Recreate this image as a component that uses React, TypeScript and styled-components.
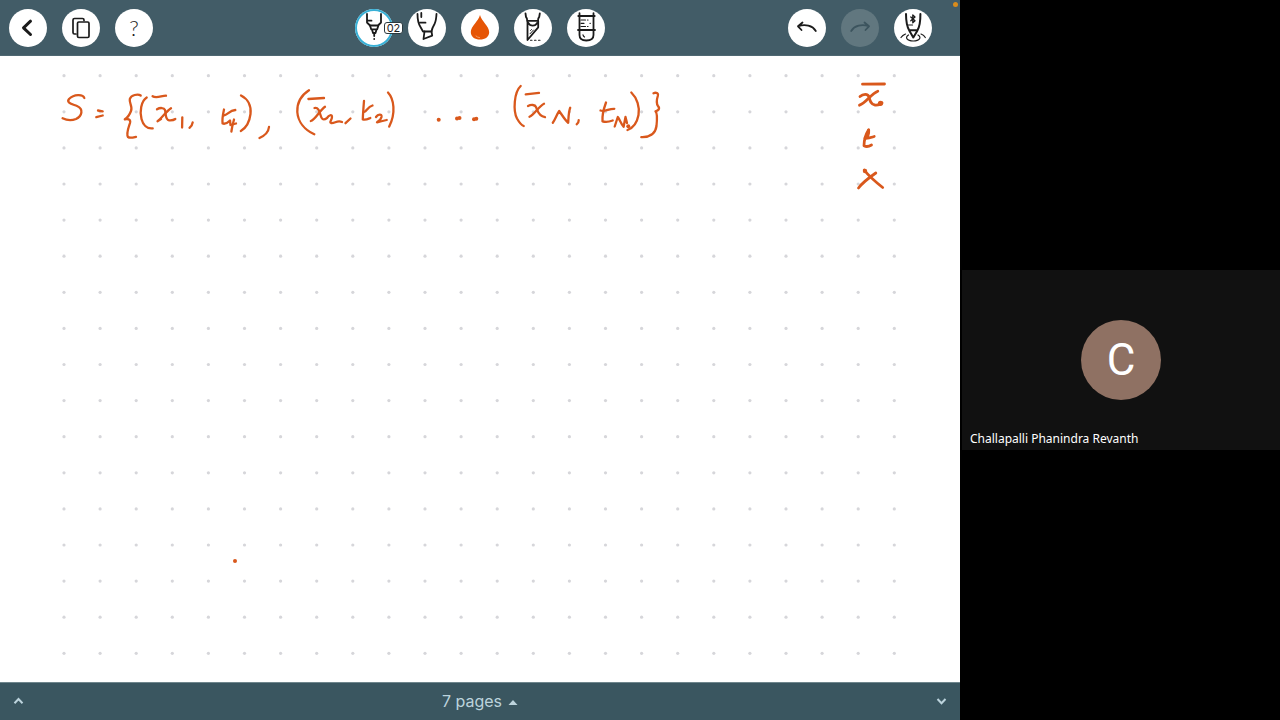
import React from "react";
import styled, { createGlobalStyle, css } from "styled-components";

const GlobalStyle = createGlobalStyle`
  * { box-sizing: border-box; }
  body { margin: 0; background: #000; }
  button { font: inherit; border: 0; padding: 0; cursor: pointer; }
`;

const Screen = styled.div`
  display: grid;
  grid-template-columns: minmax(0, 3fr) minmax(0, 1fr);
  min-height: 100vh;
  background: #000;
`;

const Board = styled.main`
  display: flex;
  flex-direction: column;
  background: #fff;
`;

const Toolbar = styled.header`
  position: relative;
  display: grid;
  grid-template-columns: 1fr auto 1fr;
  align-items: center;
  height: 56px;
  padding: 0 28px 0 9px;
  background: #425c67;
  border-bottom: 1px solid #4f6872;
`;

const ToolGroup = styled.div<{ $align?: "start" | "end" | "center" }>`
  display: flex;
  gap: 15px;
  justify-content: ${(p) => p.$align ?? "center"};
`;

const CenterTools = styled(ToolGroup)`
  margin-left: 19px;
`;

const RoundButton = styled.button<{ $active?: boolean }>`
  position: relative;
  display: flex;
  align-items: center;
  justify-content: center;
  width: 38px;
  height: 38px;
  border-radius: 50%;
  background: #fff;
  color: #1b1b1b;
  font-family: Lato, sans-serif;
  font-size: 22px;
  font-weight: 300;
  line-height: 24px;
  ${(p) =>
    p.$active &&
    css`
      box-shadow: inset 0 0 0 2px #38b0d6;
    `}
  &:disabled {
    background: #61777f;
    color: #3c545e;
  }
`;

const Badge = styled.span`
  position: absolute;
  top: 13px;
  left: 29px;
  width: 19px;
  height: 12px;
  border: 1px solid #2b3a40;
  border-radius: 3px;
  background: #fff;
  font-family: Inter, sans-serif;
  font-size: 11px;
  font-weight: 400;
  line-height: 10px;
  text-align: center;
`;

const Notice = styled.span`
  position: absolute;
  top: 2px;
  right: 2px;
  width: 5px;
  height: 5px;
  border-radius: 50%;
  background: #d98c1c;
`;

const Page = styled.svg`
  display: block;
  flex: 1 0 auto;
  width: 100%;
`;

const Footer = styled.footer`
  display: flex;
  align-items: center;
  justify-content: space-between;
  height: 38px;
  padding: 0 12px 2px;
  background: #3a5660;
  border-top: 1px solid #6f868d;
`;

const FooterButton = styled.button`
  display: flex;
  align-items: center;
  gap: 6px;
  background: none;
  color: #bcd3dc;
  font-family: Inter, sans-serif;
  font-size: 16px;
  line-height: 20px;
`;

const CallPanel = styled.aside`
  display: flex;
  flex-direction: column;
  justify-content: center;
  padding-left: 2px;
`;

const Tile = styled.section`
  position: relative;
  display: flex;
  align-items: center;
  justify-content: center;
  min-height: 180px;
  background: #111;
`;

const Avatar = styled.div`
  display: flex;
  align-items: center;
  justify-content: center;
  width: 80px;
  height: 80px;
  border-radius: 50%;
  background: #8f7163;
  color: #fff;
  font-family: Roboto, sans-serif;
  font-size: 44px;
  line-height: 60px;
`;

const Name = styled.span`
  position: absolute;
  left: 8px;
  bottom: 3px;
  color: #fff;
  font-family: "Noto Sans", sans-serif;
  font-size: 12px;
  line-height: 16px;
`;

const Icon = ({ children, width = 1.8 }: { children: React.ReactNode; width?: number }) => (
  <svg
    width="38"
    height="38"
    viewBox="0 0 38 38"
    fill="none"
    stroke="currentColor"
    strokeWidth={width}
    strokeLinecap="round"
    strokeLinejoin="round"
    aria-hidden="true"
  >
    {children}
  </svg>
);

const COLUMNS = 24;
const ROWS = 17;
const STEP = 36.1;

const fineInk = [
  // S =
  "M84.3 98 C83 94 74 94 69 99 C66 103 72 104 77 106 C84 109 82 116 76 119 C71 121 66 120 62.6 118.3",
  "M98 110.5 L102.7 111.3",
  "M96.3 117.2 L102.7 115.5",
  // opening brace and first pair
  "M140.7 95.5 C138 93.5 131 95 129.8 99 C129 103 133 107 131 111 C129.5 115 127 118 124.8 119.3 C128 118.5 131 119.5 130 123 C128 129 126 134 128 137 C130 138.5 133 137.5 136 136.8",
  "M146.7 97.5 C141 101 139.5 112 141.5 119 C143 125 147 129 152.7 128.3",
  "M152.6 96.2 C156 98.5 161 96 166 95.7",
  "M157 109.3 C160 107.5 164 107.5 165 110 C166 113 165 120 169 120.3 C172 120.5 174 120 175.3 119",
  "M171 108.3 C166 111.5 161 119 157.5 121.2 L161 119",
  "M182.3 117.3 L182.1 127.5",
  "M192.7 122.3 Q192.3 125.5 189.5 127.8",
  "M224 109.5 C223 114 222 119 222.6 123.5 C225 124.3 228 122.5 230 120.5 L230.5 125 L236 123.5",
  "M223.5 115.5 C228 115 229 110.5 235.3 110",
  "M234 119.5 C233 123 232 127 231.4 131.5",
  "M241 95.5 C248 99 251.5 106 250.5 114 C249.5 122 246 128 240.8 131",
  "M269 127 C268.5 132 264 136 259.5 138",
  // second pair
  "M309 90.3 C300 96 297 104 297.3 112 C298 122 305 130 314.3 134.3",
  "M308.4 99 L324 98",
  "M314.5 108 C318 107 319.5 111 320.5 115 C321.5 119 323 121 327 118 C329 115 332 114 332 117 C332 120 329 122.5 331 123 C335 123.5 337 120 342 122",
  "M325 106.8 C320 110 315 120 310.8 121",
  "M350.5 118.5 L345.5 123.2",
  "M364 101 C363.5 107 363 113 362.8 119.5 C366 120.2 368 119 370.3 118",
  "M364 112 C367 111 367.5 107 372.5 105.5",
  "M376 117 C378 114 382 113.5 381.5 117 C381 120 378 121.5 377 122.3 C380 121.5 383 120.8 386.7 120",
  "M388 92.5 C394 99 396 113 389.2 126.6",
  // third pair and closing brace
  "M520.7 86 C514 92 513 111 517 118.5 C519 122 521 125 523.7 126",
  "M525.7 94.3 L539 92.8",
  "M528 106 C531 104.5 535 104.5 536 107 C537.5 110 538 116 545 117.2",
  "M544 103.7 C539 106 534 115 529.5 116.8",
  "M552.8 122.8 C555 120 557 114 559.2 111 C562 115 565 120 568.2 122.8 C568.5 118 568.5 112 570.2 107.8",
  "M578.7 120.2 Q578.7 123 576.7 124.2",
  "M606 102.5 C604 108 602 115 602.5 121.3 C606 122.5 610 121.5 612.7 120.5",
  "M600.5 110.5 C605 112 609 108.5 614.3 108.8",
  "M614.7 126.5 L617.8 117 C620 120 621 124 623.6 126.8 L625.5 117 L627 123",
  "M631.3 92.5 C637 98 640 107 638.5 115 C637 123 633 128 627.5 130",
  "M653.5 93.2 C656 92.2 658.7 93 657.8 96 C656.5 100 656 103 658 106 C660.5 109 658 110.5 655.5 111.3 C657.5 113 657 121 656.5 126 C655.5 134 649 137.5 641.3 137.2",
];

const boldInk = [
  "M862.5 84.2 L884.5 84",
  "M860 96.5 C863 93.7 868 93.3 869 97 C870 101 871 104.5 875 105 C878 105.2 881 104 882 102.8",
  "M877.8 91.3 C871 94 866 103 859.5 105.2",
  "M868.5 130 C866 134 864 140 864 145.8 C867 147.3 869 146.5 871.5 145",
  "M868.7 130 C869 134 868 137 865 138.2 C869 138.5 871 137.5 874.2 136.5",
  "M864.2 170 C868 175 877 183 882.7 187.5",
  "M875.8 173 C870 177 863 182 858.5 188",
];

const inkDots = [
  [438.7, 119.7],
  [457, 118.4],
  [459.5, 118],
  [474, 119.2],
  [476.3, 118.7],
  [235, 561],
  [628.3, 126.2],
];

function Canvas() {
  const dots: React.ReactNode[] = [];
  for (let r = 0; r < ROWS; r++) {
    for (let c = 0; c < COLUMNS; c++) {
      dots.push(<circle key={`${r}-${c}`} cx={64 + c * STEP} cy={75.7 + r * STEP} r="1.6" />);
    }
  }
  return (
    <Page viewBox="0 56 960 626" preserveAspectRatio="xMidYMin meet" role="img" aria-label="Handwritten notes">
      <g fill="#d6d6da">{dots}</g>
      <g fill="none" stroke="#d9581c" strokeLinecap="round" strokeLinejoin="round">
        <g strokeWidth="2.3">
          {fineInk.map((d) => (
            <path key={d} d={d} />
          ))}
        </g>
        <g strokeWidth="2.8">
          {boldInk.map((d) => (
            <path key={d} d={d} />
          ))}
        </g>
      </g>
      <g fill="#d9581c">
        {inkDots.map(([x, y]) => (
          <circle key={x} cx={x} cy={y} r="2" />
        ))}
        <circle cx="880.5" cy="103.3" r="2.6" />
        <circle cx="865" cy="171" r="2.2" />
      </g>
    </Page>
  );
}

export default function App() {
  return (
    <Screen>
      <GlobalStyle />
      <Board>
        <Toolbar>
          <ToolGroup $align="start">
            <RoundButton aria-label="Back">
              <Icon width={3}>
                <path d="M21.5 12.2 L14.5 18.8 L21.5 25.5" />
              </Icon>
            </RoundButton>
            <RoundButton aria-label="Pages">
              <Icon width={1.7}>
                <path d="M14 25 H12.5 Q11 25 11 23.5 V11 Q11 9.5 12.5 9.5 H20.5 Q22 9.5 22 11 V11.5" />
                <rect x="15.5" y="13" width="11.5" height="15.5" rx="1.3" />
              </Icon>
            </RoundButton>
            <RoundButton aria-label="Help">?</RoundButton>
          </ToolGroup>

          <CenterTools>
            <RoundButton $active aria-label="Pen, size 02">
              <Icon>
                <path d="M12 5 V13.5 L15 16.5 H23 L26 13.5 V5 M13 11.7 H16.5" />
                <path d="M15 16.5 L16.2 20.3 H22.2 L23.4 16.5 M17 20.5 L18 24 H20.5 L21.5 20.5 M19.2 24 V27 M19.2 30 V30.1" />
              </Icon>
              <Badge>02</Badge>
            </RoundButton>
            <RoundButton aria-label="Marker">
              <Icon>
                <path d="M9.5 5 C9.5 11 10.5 15 12.5 18 L15 22.5 H23.5 C24 19 25 17.5 26.5 15 C28 12 28.3 9 28.5 5" />
                <path d="M13.3 4 V8 M12 13.7 H17.5 M16.5 22.5 L15.5 30 L24.2 26.7 L23.5 22.5" />
              </Icon>
            </RoundButton>
            <RoundButton aria-label="Ink colour">
              <Icon>
                <path
                  d="M19 6 C20.5 12 28.2 17.5 28.2 23 C28.2 28 24 30.5 19 30.5 C14 30.5 9.8 28 9.8 23 C9.8 17.5 17.5 12 19 6 Z"
                  fill="#e65505"
                  stroke="none"
                />
                <path d="M15 27 Q16.5 28.5 18.5 28.6" stroke="#f29a63" strokeWidth="1" />
              </Icon>
            </RoundButton>
            <RoundButton aria-label="Cutter">
              <Icon>
                <path d="M11.5 4.5 L12 8 Q13.2 9 13.2 11.8 H24 Q24 9 25.2 8 L25.8 4.5" />
                <path d="M13.5 12 V31 L24.2 18.3 V12 M14.5 14 C16 17.5 21.5 17.5 23 14" />
                <path d="M16.5 21.5 L17.5 20.5 M16 24.8 L19.5 21" strokeWidth="1" />
                <path d="M16.5 31.3 H26" strokeDasharray="1.5 2.5" strokeWidth="1.1" />
              </Icon>
            </RoundButton>
            <RoundButton aria-label="Eraser">
              <Icon>
                <path d="M12.5 4.2 V26 Q12.5 31.5 19.3 31.5 Q26.5 31.5 26.5 26 V4.2 M11.3 7 H27.7 M11 21 H28" />
                <path d="M14 11 H18.5 M14 14.3 H17 M14 17.5 H18.5 M23 14.3 H23.3 M20.5 11 H21 M20.5 17.5 H21 M16 25.8 Q16.3 27.3 17.5 28" strokeWidth="1.2" />
              </Icon>
            </RoundButton>
          </CenterTools>

          <ToolGroup $align="end">
            <RoundButton aria-label="Undo">
              <Icon>
                <path d="M14.5 13.5 L10 17.3 L13.5 21 M10.5 17.2 C17 15 24.5 16.5 27.8 22" />
              </Icon>
            </RoundButton>
            <RoundButton aria-label="Redo" disabled>
              <Icon>
                <path d="M23.5 13.5 L28 17.3 L24.5 21 M27.5 17.2 C21 15 13.5 16.5 10.2 22" />
              </Icon>
            </RoundButton>
            <RoundButton aria-label="Connect pen">
              <Icon width={2}>
                <path d="M12 5 C12 12 13 18 15.5 22 L19.3 28.5 L23.2 22 C25.5 18 26.5 12 26.4 5 M15.3 21.3 H23.3" />
                <path d="M14.3 16 H18.5" strokeWidth="1.2" />
                <path d="M16.8 8 L21 11.8 L18.8 13.8 V6 L21 8 L16.8 11.8" strokeWidth="1.3" />
                <path d="M14.5 26 C10.5 28.5 13 32 19.3 32 C25.5 32 28 28.5 24 26 M11.5 25 Q8.5 26.2 7 28.5 M27 25 Q30 26.2 31.3 28.5" strokeWidth="1.2" />
              </Icon>
            </RoundButton>
          </ToolGroup>
          <Notice />
        </Toolbar>

        <Canvas />

        <Footer>
          <FooterButton aria-label="Expand">
            <svg width="13" height="10" viewBox="0 0 13 10" fill="none" stroke="currentColor" strokeWidth="2">
              <path d="M2.5 7.2 L6.5 3 L10.5 7.2" />
            </svg>
          </FooterButton>
          <FooterButton>
            7 pages
            <svg width="10" height="10" viewBox="0 0 10 10" fill="currentColor" aria-hidden="true">
              <path d="M0.5 9 L5 4 L9.5 9 Z" />
            </svg>
          </FooterButton>
          <FooterButton aria-label="Next page">
            <svg width="13" height="10" viewBox="0 0 13 10" fill="none" stroke="currentColor" strokeWidth="2">
              <path d="M2.5 3 L6.5 7.2 L10.5 3" />
            </svg>
          </FooterButton>
        </Footer>
      </Board>

      <CallPanel>
        <Tile>
          <Avatar>C</Avatar>
          <Name>Challapalli Phanindra Revanth</Name>
        </Tile>
      </CallPanel>
    </Screen>
  );
}
